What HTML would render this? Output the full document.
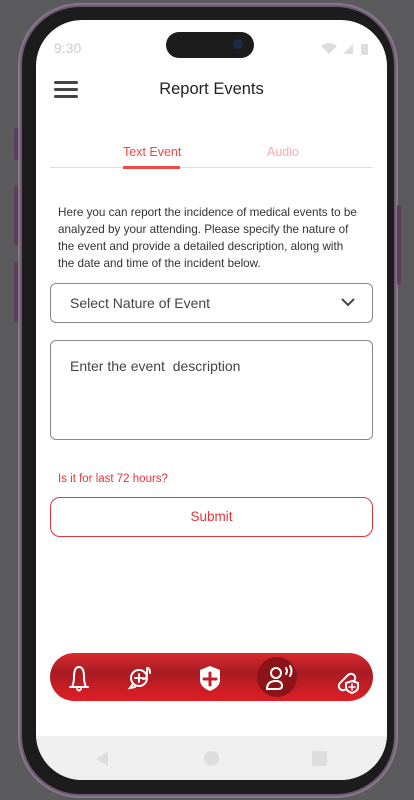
<!DOCTYPE html>
<html><head><meta charset="utf-8"><style>
*{margin:0;padding:0;box-sizing:border-box}
body{width:414px;height:800px;background:#5b5b5d;font-family:"Liberation Sans",sans-serif;position:relative;overflow:hidden}
.frame{position:absolute;left:18px;top:3px;width:380px;height:795px;border-radius:62px;background:#6e5a6e;border:2px solid #8a7590}
.bezel{position:absolute;left:22px;top:7px;width:372px;height:787px;border-radius:58px;background:#1c1c1c}
.screen{position:absolute;left:36px;top:20px;width:351px;height:760px;border-radius:46px;background:#fff;overflow:hidden}
.abs{position:absolute}
.btn{position:absolute;width:4px;background:#5a3f58;left:14px;border-radius:2px}
</style></head><body>
<div class="frame"></div>
<div class="btn" style="top:128px;height:32px"></div>
<div class="btn" style="top:185px;height:60px"></div>
<div class="btn" style="top:262px;height:60px"></div>
<div class="btn" style="left:397px;top:205px;height:80px"></div>
<div class="bezel"></div>
<div class="screen">
 <div class="abs" style="left:18px;top:20px;font-size:14px;color:#ccc">9:30</div>
 <div class="abs" style="left:130px;top:12px;width:88px;height:26px;border-radius:13px;background:#1c1c1c"></div>
 <div class="abs" style="left:197px;top:19px;width:10px;height:10px;border-radius:5px;background:#1d2b45"></div>
 <svg class="abs" style="left:285px;top:22px" width="50" height="14"><path d="M0 4 Q8 -2 16 4 L8 12Z" fill="#ddd"/><path d="M22 12 L32 2 L32 12Z" fill="#ddd"/><rect x="40" y="2" width="7" height="11" rx="1" fill="#ddd"/></svg>
 <div class="abs" style="left:18px;top:61px;width:24px;height:3px;background:#444;border-radius:2px;box-shadow:0 7px 0 #444,0 14px 0 #444"></div>
 <div class="abs" style="left:0;width:351px;top:60px;text-align:center;font-size:16.5px;color:#222">Report Events</div>
 <div class="abs" style="left:87px;top:125px;font-size:12.5px;color:#f04848">Text Event</div>
 <div class="abs" style="left:231px;top:125px;font-size:12.5px;color:#f8aab0">Audio</div>
 <div class="abs" style="left:14px;top:147px;width:323px;height:1px;background:#ddd"></div>
 <div class="abs" style="left:87px;top:146px;width:57px;height:3px;background:#f04848"></div>
 <div class="abs" style="left:22px;top:184px;width:302px;font-size:11.7px;line-height:17px;color:#333">Here you can report the incidence of medical events to be analyzed by your attending. Please specify the nature of the event and provide a detailed description, along with the date and time of the incident below.</div>
 <div class="abs" style="left:14px;top:263px;width:323px;height:40px;border:1px solid #888;border-radius:6px;padding:11px 19px;font-size:14px;color:#444">Select Nature of Event</div>
 <svg class="abs" style="left:305px;top:278px" width="14" height="9"><path d="M1 1 L7 7 L13 1" stroke="#444" stroke-width="2" fill="none"/></svg>
 <div class="abs" style="left:14px;top:320px;width:323px;height:100px;border:1px solid #888;border-radius:6px;padding:17px 19px;font-size:14px;color:#444">Enter the event&nbsp; description</div>
 <div class="abs" style="left:22px;top:453px;font-size:11.5px;color:#e8333b">Is it for last 72 hours?</div>
 <div class="abs" style="left:14px;top:477px;width:323px;height:40px;border:1px solid #e8333b;border-radius:10px;text-align:center;line-height:38px;font-size:13.5px;color:#e8333b">Submit</div>
 <div class="abs" style="left:14px;top:633px;width:323px;height:48px;border-radius:24px;background:linear-gradient(#d82a30,#a81c22 40%,#e01e26)"></div>
 <div class="abs" style="left:221px;top:637px;width:40px;height:40px;border-radius:20px;background:#8c1418"></div>
 <svg class="abs" style="left:14px;top:633px" width="323" height="48" fill="none" stroke="#fff" stroke-width="2" stroke-linecap="round">
  <path d="M20 34 L38 34 M22 34 Q24 30 24 24 Q24 14 29 14 Q34 14 34 24 Q34 30 36 34 M27 36 Q29 39 31 36"/>
  <circle cx="89" cy="25" r="8"/><path d="M85 25h8M89 21v8M83 31 l-3 4 5-1"/><path d="M97 15 v6 q0 5 -4 5 M97 15 q3 0 3 5"/>
  <path d="M160 13 L170 17 V27 Q170 34 160 38 Q150 34 150 27 V17Z" fill="#fff" stroke="none"/><path d="M160 20v12M154 26h12" stroke="#c0202a" stroke-width="3"/>
  <circle cx="226" cy="20" r="5"/><path d="M217 36 q0 -8 9 -8 q6 0 6 5 q0 3 -4 3 Z"/><path d="M236 15 q2 3 0 6 M240 13 q3 5 0 10"/>
  <path d="M290 30 l8 -8 a4 4 0 0 1 6 6 l-8 8 a4 4 0 0 1 -6 -6Z"/><path d="M302 28 l6 2 v4 q0 4 -6 6 q-6 -2 -6 -6 v-4Z" fill="#c0202a"/><path d="M302 31v6M299 34h6" stroke-width="1.5"/>
 </svg>
 <div class="abs" style="left:0;top:716px;width:351px;height:44px;background:#efefef"></div>
 <div class="abs" style="left:60px;top:732px;width:0;height:0;border-top:7px solid transparent;border-bottom:7px solid transparent;border-right:12px solid #ddd"></div>
 <div class="abs" style="left:168px;top:731px;width:15px;height:15px;border-radius:8px;background:#ddd"></div>
 <div class="abs" style="left:276px;top:731px;width:15px;height:15px;border-radius:2px;background:#ddd"></div>
</div>
</body></html>
